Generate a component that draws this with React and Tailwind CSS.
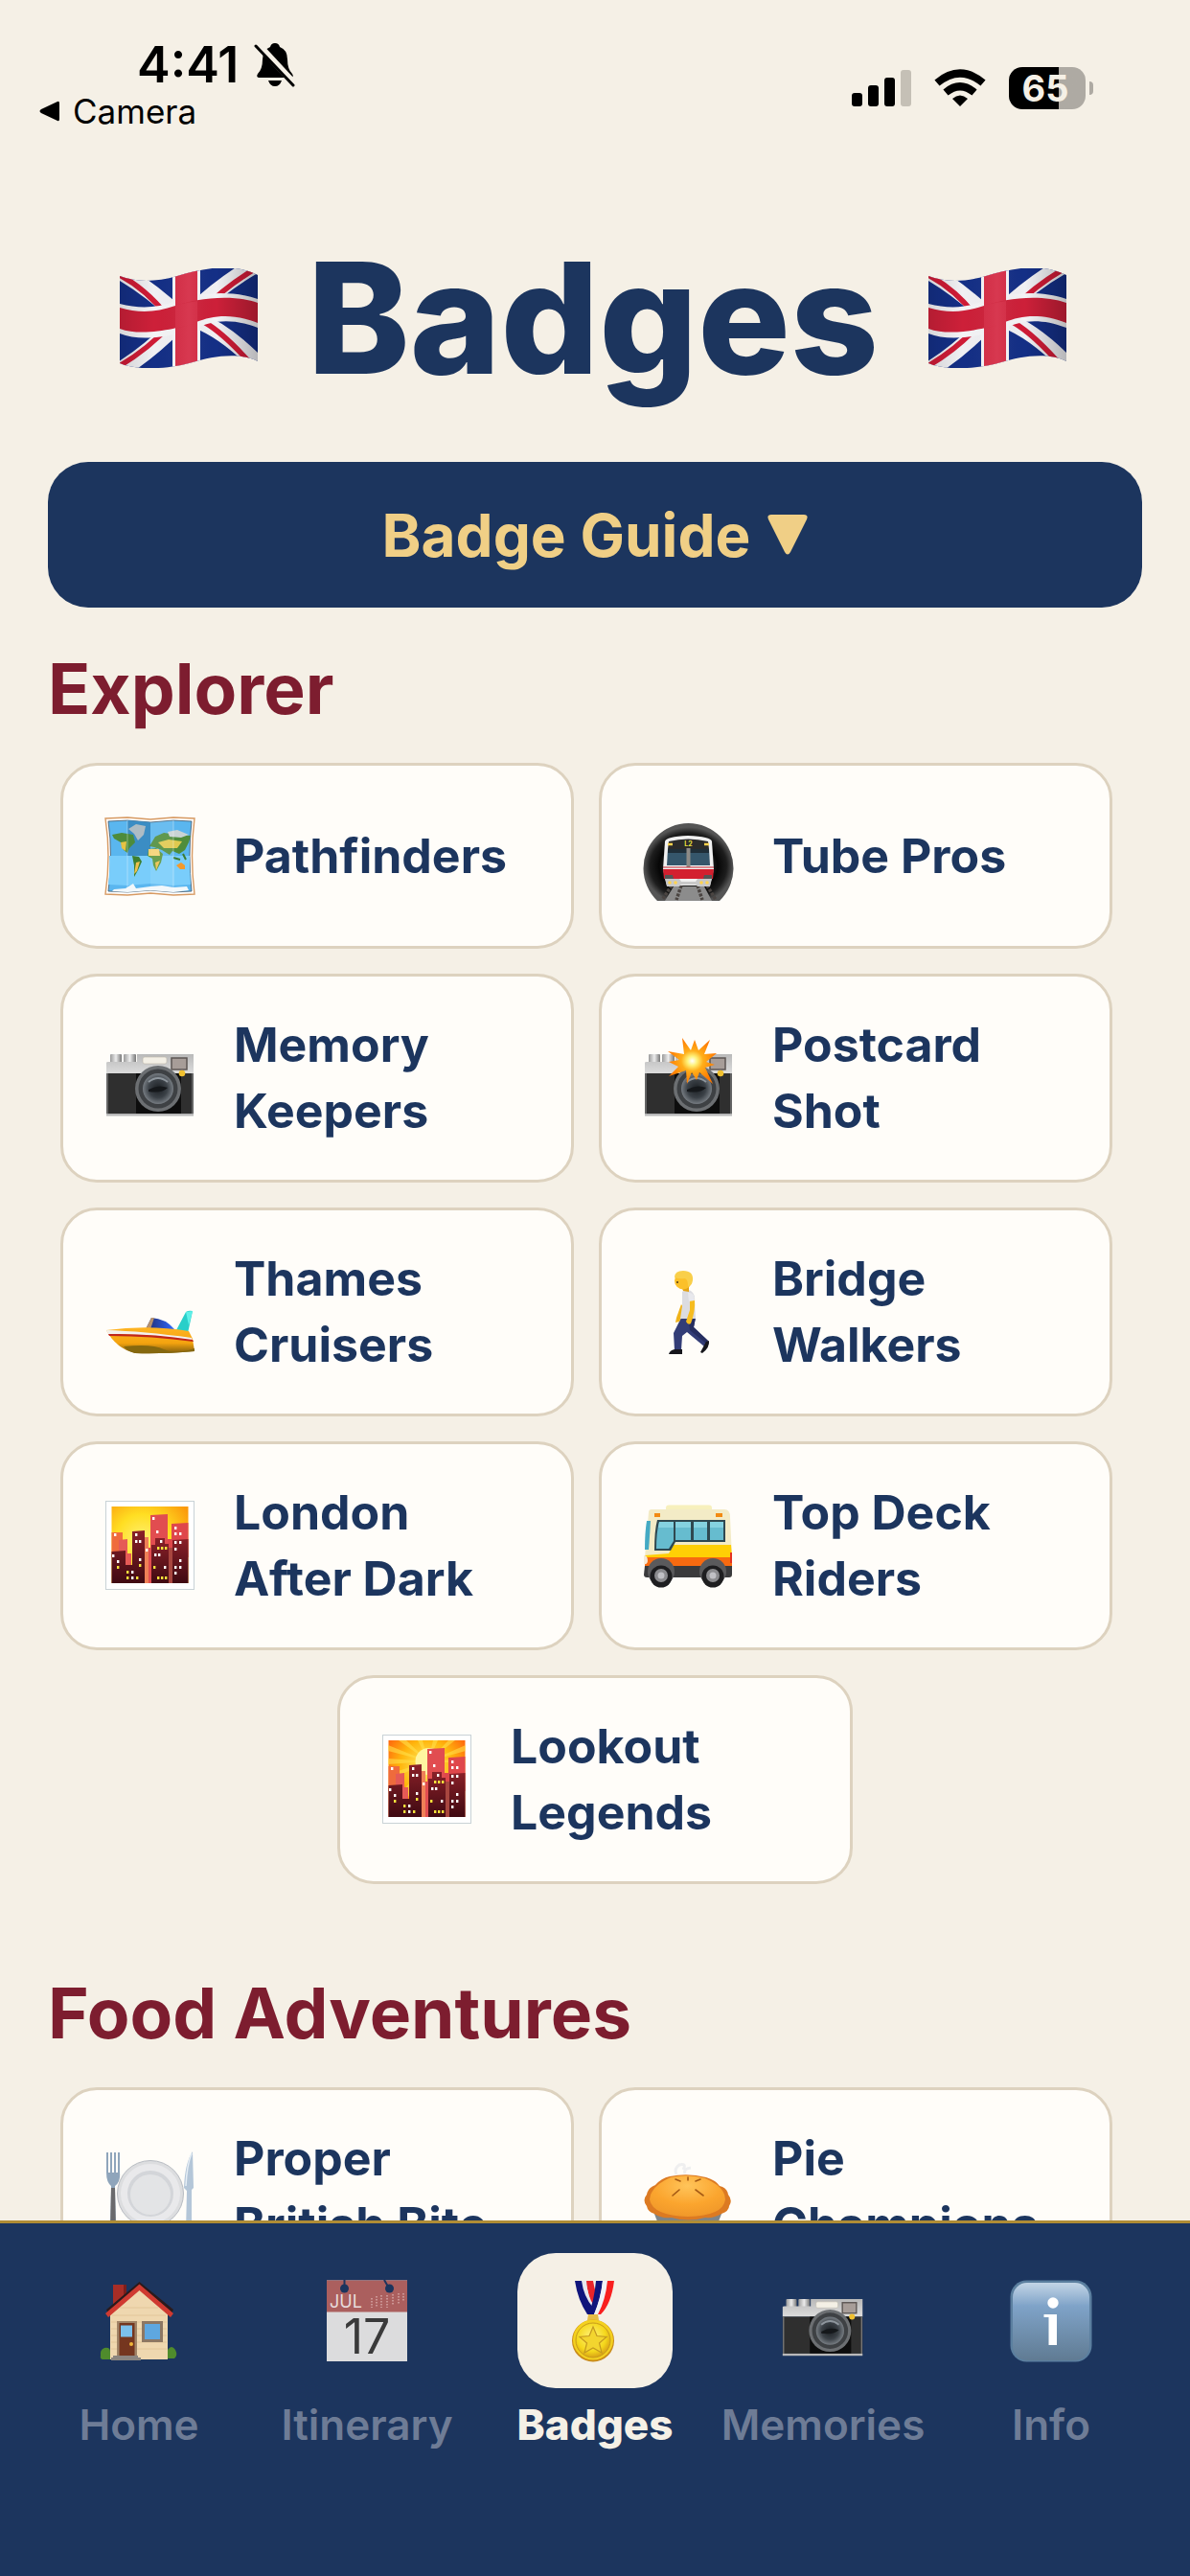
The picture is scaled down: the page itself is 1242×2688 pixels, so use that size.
import React from 'react';

const UnionJack = () => (
  <svg viewBox="0 0 144 104" className="w-36 h-[104px] shrink-0" role="img" aria-label="Union Jack">
    <defs>
      <clipPath id="flagShape">
        <path d="M0 8C15 14 36 15 60 8S116 -7 144 7V97C124 87 96 92 76 98S20 108 0 99Z" />
      </clipPath>
      <linearGradient id="flagShade" x1="0" x2="1" y1="0" y2="0">
        <stop offset="0" stopColor="#000" stopOpacity="0.12" />
        <stop offset="0.25" stopColor="#000" stopOpacity="0" />
        <stop offset="0.5" stopColor="#fff" stopOpacity="0.06" />
        <stop offset="0.7" stopColor="#000" stopOpacity="0" />
        <stop offset="1" stopColor="#000" stopOpacity="0.24" />
      </linearGradient>
    </defs>
    <g clipPath="url(#flagShape)">
      <rect width="144" height="104" fill="#142f86" />
      <g stroke="#f0f0f3" strokeWidth="17" fill="none">
        <path d="M-2 2Q30 20 62 50" />
        <path d="M150 -8Q112 12 78 44" />
        <path d="M-6 110Q26 92 60 58" />
        <path d="M80 54Q112 66 150 106" />
      </g>
      <g stroke="#cf1b36" strokeWidth="5.500" fill="none">
        <path d="M-2 6Q26 20 50 50" />
        <path d="M146 -2Q112 17 86 44" />
        <path d="M-4 104Q28 86 54 58" />
        <path d="M88 56Q112 70 144 108" />
      </g>
      <path d="M55 0H84V104H55Z" fill="#f4f4f6" />
      <path d="M0 37C20 42 38 42 58 34S116 22 144 32V62C116 51 96 55 80 62S24 78 0 68Z" fill="#f4f4f6" />
      <path d="M58 0H81V104H58Z" fill="#d52c45" />
      <path d="M0 41C20 47 38 46 58 39S116 26 144 36V57C116 46 96 50 80 56S24 72 0 63Z" fill="#cd2039" />
      <path d="M58 38L81 34V57L58 63Z" fill="#d52c45" />
      <rect width="144" height="104" fill="url(#flagShade)" />
    </g>
  </svg>
);

const MapArt = () => (
  <>
    <path d="M1 9L24 8L48 10L72 8L94 9Q89 48 94 88L72 89L48 87L24 89L1 88Q7 48 1 9Z" fill="#fff" stroke="#d79a63" strokeWidth="1.4" />
    <path d="M4 12L24 11L48 13L72 11L91 12Q87 48 91 85L72 86L48 84L24 86L4 85Q9 48 4 12Z" fill="#5ab6ef" stroke="#456" strokeWidth="0.8" />
    <path d="M24 11L48 13V48H24Z" fill="#3b8dc4" />
    <path d="M5 48H89Q89 66 90 78L72 79L48 77L24 79L4 78Q6 62 5 48Z" fill="#79cdfb" />
    <path d="M25 20L33 15L43 17L41 26L35 32L31 25Z" fill="#aebcc4" />
    <path d="M8 26L18 24L30 26L32 34L26 40L24 45L20 42L17 34L10 30Z" fill="#4d8b3c" />
    <path d="M17 34L23 33L22 43L18 40Z" fill="#e5c344" />
    <path d="M29 48L36 49L39 54L35 63L31 70L31 58Z" fill="#3d7f30" />
    <path d="M33 55L37 54L34 64L31 67Z" fill="#eec04e" />
    <path d="M46 41L54 40L61 46L59 55L54 64L51 58L50 51L45 48Z" fill="#58953c" />
    <path d="M46 41L57 41L58 48L46 48Z" fill="#f3d374" />
    <path d="M53 55L58 53L54 63Z" fill="#eec04e" />
    <path d="M47 38L53 28L62 24L76 26L90 27L88 34L84 42L78 46L71 43L68 47L60 42L52 39Z" fill="#4f8d3b" />
    <path d="M56 34L67 31L81 33L76 40L62 40Z" fill="#dfc94f" />
    <path d="M66 23L76 21L88 26L80 29L68 28Z" fill="#c9d3d3" />
    <path d="M75 58L80 55L84 58L84 62L79 62Z" fill="#f49a2c" />
    <path d="M72 50L79 52M82 46L85 52" stroke="#3c7c34" strokeWidth="2" />
    <path d="M10 83L22 82L30 77L33 82L48 80L60 79L72 81L86 80L88 84L72 86L48 84L24 86L8 85Z" fill="#f2f8fb" />
    <path d="M24 11V86M72 11V86" stroke="#fff" strokeOpacity="0.35" />
    <path d="M48 13L72 11V86L48 84Z" fill="#fff" fillOpacity="0.1" />
  </>
);

const TubeArt = () => (
  <>
    <defs>
      <radialGradient id="tunnel" cx="0.5" cy="0.55" r="0.5">
        <stop offset="0" stopColor="#777" />
        <stop offset="0.65" stopColor="#060606" />
        <stop offset="0.85" stopColor="#1d1d1d" />
        <stop offset="1" stopColor="#555" />
      </radialGradient>
    </defs>
    <path d="M15 95A47 47 0 1 1 80 95Z" fill="url(#tunnel)" />
    <path d="M32 80H64L72 95H23Z" fill="#8c8c8c" />
    <path d="M30 79L20 94M40 79L35 94M57 79L62 94M67 79L76 94" stroke="#4b4542" strokeWidth="3.500" strokeDasharray="3 1.5" />
    <path d="M23 33Q24 28 47 27Q71 28 72 33L74 62L70 79H25L21 62Z" fill="#f1f1f1" />
    <path d="M27 33Q47 28 68 33L69 41H26Z" fill="#2b2b2b" />
    <path d="M26 41H69L70 58H25Z" fill="#35566b" />
    <path d="M26 41H69V45H26Z" fill="#1f2e38" />
    <rect x="45.500" y="40" width="4" height="20" fill="#8e8b87" />
    <text x="47.500" y="38" fontSize="7" fontWeight="700" textAnchor="middle" fill="#e8e23c" fontFamily="Inter, sans-serif">L2</text>
    <path d="M26 36H31M64 36H69" stroke="#ffd34f" strokeWidth="2.400" />
    <path d="M21 62H74L73 72H22Z" fill="#d3202f" />
    <path d="M21 60H74" stroke="#c12430" strokeWidth="1" />
    <path d="M23 68H31L32 72H23ZM72 68H64L63 72H72Z" fill="#555" />
    <path d="M23 72H38L40 75H55L57 72H72L70 80H57L55 78H40L38 80H25Z" fill="#c9c9c9" />
    <g fill="#ffd34f">
      <circle cx="28" cy="76" r="1.800" />
      <circle cx="34" cy="76" r="1.800" />
      <circle cx="61" cy="76" r="1.800" />
      <circle cx="67" cy="76" r="1.800" />
    </g>
  </>
);

const CameraArt = () => (
  <>
    <defs>
      <linearGradient id="silver" x1="0" x2="0" y1="0" y2="1">
        <stop offset="0" stopColor="#b9b9b9" />
        <stop offset="1" stopColor="#dcdcdc" />
      </linearGradient>
      <linearGradient id="dial" x1="0" x2="1" y1="0" y2="0">
        <stop offset="0" stopColor="#9a9a9a" />
        <stop offset="0.5" stopColor="#ececec" />
        <stop offset="1" stopColor="#777" />
      </linearGradient>
      <radialGradient id="glass">
        <stop offset="0" stopColor="#1c2024" />
        <stop offset="0.6" stopColor="#3b4147" />
        <stop offset="1" stopColor="#767c82" />
      </radialGradient>
    </defs>
    <rect x="6" y="23" width="12" height="9" rx="1" fill="url(#dial)" />
    <rect x="20" y="23" width="13" height="9" rx="1" fill="url(#dial)" />
    <path d="M2 32Q2 31 4 31H34V23H93V43H2Z" fill="url(#silver)" />
    <rect x="2" y="43" width="91" height="42" fill="#2f2f2f" />
    <rect x="33" y="43" width="47" height="42" fill="#0d0d0d" />
    <rect x="2" y="85" width="91" height="2.500" fill="#b9b9b9" />
    <path d="M3 43V85M92 43V85" stroke="#777" strokeWidth="1.500" />
    <rect x="40" y="26" width="25" height="7" rx="2" fill="#f4f0e6" stroke="#bdb7aa" strokeWidth="0.600" />
    <rect x="70" y="27" width="16" height="12" fill="#a79d98" stroke="#5c5653" strokeWidth="1.500" />
    <circle cx="56" cy="59" r="24" fill="#6c6f72" />
    <circle cx="56" cy="59" r="20.500" fill="#3e4144" />
    <circle cx="56" cy="59" r="16" fill="url(#glass)" />
    <path d="M46 52Q56 44 66 52" stroke="#8e969d" strokeWidth="2" fill="none" />
    <path d="M46 60Q56 54 66 58Q60 64 46 62Z" fill="#15181b" />
    <circle cx="81" cy="43" r="3.300" fill="#f0c02f" />
  </>
);

const FlashCameraArt = () => (
  <>
    <defs>
      <radialGradient id="flash">
        <stop offset="0" stopColor="#fff" />
        <stop offset="0.2" stopColor="#fff27a" />
        <stop offset="0.45" stopColor="#ffae1a" />
        <stop offset="1" stopColor="#ff7800" />
      </radialGradient>
    </defs>
    <CameraArt />
    <path d="M41 6L50 19L54 8L58 19L70 8L64 23L77 22L66 31L75 34L65 37L73 54L59 42L56 50L51 42L46 54L45 40L27 46L37 36L27 31L38 29L26 20L43 23Z" fill="url(#flash)" />
  </>
);

const BoatArt = () => (
  <>
    <defs>
      <linearGradient id="hull" x1="0" x2="0" y1="0" y2="1">
        <stop offset="0" stopColor="#ffb422" />
        <stop offset="0.6" stopColor="#f4a30f" />
        <stop offset="1" stopColor="#7d5c0e" />
      </linearGradient>
      <linearGradient id="cabin" x1="0" x2="1" y1="0" y2="0">
        <stop offset="0" stopColor="#222b6b" />
        <stop offset="1" stopColor="#2e68ff" />
      </linearGradient>
    </defs>
    <path d="M43 66L49 54Q64 55 73 66Z" fill="url(#cabin)" />
    <path d="M43 66L49 54L52 54L48 66Z" fill="#b7926f" />
    <path d="M75 67L85 48Q88 46 92 47L87 70Z" fill="#29cfc9" />
    <path d="M85 48L92 47L88 62Z" fill="#5ff0e8" />
    <path d="M2 67Q46 61 88 68L92 76L94 89Q60 92 32 91Q12 86 2 67Z" fill="url(#hull)" />
    <path d="M2 67Q40 68 91 75L92 78Q50 71 4 71Z" fill="#f3f1ee" />
    <path d="M4 71Q48 70 92 77L93 79Q50 73 5 73Z" fill="#c1261b" />
    <path d="M20 84Q50 81 62 87T94 86V89Q60 92 32 91Q24 89 20 84Z" fill="#86680f" />
  </>
);

const WalkerArt = () => (
  <>
    <path d="M40 54L55 54L53 64L68 78L64 84L46 69L41 73L40 88H33L32 70Z" fill="#333d77" />
    <path d="M48 57L55 54L53 64L68 78L66 81L49 67Z" fill="#262e60" />
    <path d="M27 92Q28 88 33 87H41V92ZM60 90L66 79L69 78Q70 85 62 91Z" fill="#16161c" />
    <path d="M40 40L35 54L34 59L38 58L44 46Z" fill="#f0b31a" />
    <path d="M41 27Q45 23 50 26Q55 29 54 38L55 55L39 55L41 42Z" fill="#dcdce0" />
    <path d="M49 33L54 34Q55 47 50 60Q47 62 45 58L49 46Z" fill="#f6bc1f" />
    <path d="M47 28Q54 27 54 36L48 37Z" fill="#e8e8ec" />
    <path d="M40 20H48V27L42 26Z" fill="#e2a316" />
    <circle cx="42" cy="15.500" r="9" fill="#fbc02a" />
    <path d="M33 12Q33 5 42 5Q53 5 52 15Q51 21 47 21Q47 14 44 13Q38 14 33 12Z" fill="#f9cf4a" />
    <circle cx="36" cy="17" r="1" fill="#4a3411" />
  </>
);

const cityWindows = [
  [10, 35], [50, 18], [54, 32], [73, 28], [73, 34], [78, 34], [73, 43], [78, 43], [73, 50],
  [32, 35], [36, 42], [32, 42], [58, 42], [8, 57], [13, 63], [36, 61], [52, 56], [56, 56],
  [62, 69], [73, 69], [78, 69], [78, 62], [73, 75], [28, 74], [28, 80], [43, 51],
];
const cityLights = [[55, 49], [59, 49], [63, 49], [13, 69], [23, 74], [23, 80], [33, 80], [36, 67], [51, 69], [55, 80], [59, 80], [63, 80]];

const CityArt = ({ sunrise = false }) => (
  <>
    <defs>
      <radialGradient id="duskSky" cx="0.4" cy="0.45" r="0.7">
        <stop offset="0" stopColor="#fff176" />
        <stop offset="0.5" stopColor="#ffde22" />
        <stop offset="1" stopColor="#fb9a0c" />
      </radialGradient>
      <radialGradient id="dawnSky" cx="0.5" cy="0.35" r="0.7">
        <stop offset="0" stopColor="#fff06a" />
        <stop offset="0.5" stopColor="#ffb60d" />
        <stop offset="1" stopColor="#ff4a0d" />
      </radialGradient>
      <linearGradient id="tower" x1="0" x2="0" y1="0" y2="1">
        <stop offset="0" stopColor="#8a2028" />
        <stop offset="1" stopColor="#3f0a12" />
      </linearGradient>
    </defs>
    <rect x="1.500" y="1.500" width="92" height="92" fill="#fff" stroke="#c9d2d6" />
    <rect x="7.500" y="7" width="80" height="80" fill={sunrise ? 'url(#dawnSky)' : 'url(#duskSky)'} />
    {sunrise && (
      <>
        <path
          d="M49 29L7 12V18ZM49 29L18 7H26ZM49 29L38 7H43ZM49 29L54 7H59ZM49 29L70 7H77ZM49 29L88 12V18ZM49 29L88 26V31ZM49 29L7 26V32ZM49 29L8 42V49ZM49 29L22 60L28 66Z"
          fill="#ffe04a"
          fillOpacity="0.6"
        />
        <circle cx="49.500" cy="29" r="14" fill="#fff5a0" />
      </>
    )}
    <path d="M7.500 34H19V60H7.500Z" fill="#ef6b3c" />
    <path d="M15 42L24 41V56H28V70H15Z" fill="#e55a56" />
    <path d="M42 39H46V87H42Z" fill="#ef8057" />
    <path d="M48 16L66 15V87H46V50H48Z" fill="#e14d50" />
    <path d="M66 41H70V25L87.500 24V60H66Z" fill="#df474b" />
    <path d="M7.500 54L22 53V68H29V33L42 32V87H7.500Z" fill="url(#tower)" />
    <path d="M49 47H53V40H63V46H67V60H71V42L87.500 41V87H49Z" fill="url(#tower)" />
    <path d="M67 50H71V87H67Z" fill="#a8463f" />
    {cityWindows.map(([x, y]) => (
      <rect key={`${x}-${y}`} x={x} y={y} width="2.400" height="3" fill="#fff" />
    ))}
    {cityLights.map(([x, y]) => (
      <rect key={`${x}-${y}`} x={x} y={y} width="2.400" height="3" fill="#f4e23c" />
    ))}
  </>
);

const SunriseArt = () => <CityArt sunrise />;

const BusArt = () => (
  <>
    <rect x="24" y="5.500" width="48" height="8" rx="3" fill="#f7f0bd" />
    <path d="M6 13Q6 10 9 10H85Q91 10 91 18L93 60V80H2V60Z" fill="#f3ebc6" />
    <path d="M2 58L27 56L32 47H92L93 60H2Z" fill="#ffcf05" />
    <path d="M2 60H93V70H2Z" fill="#f76a10" />
    <path d="M2 69H93V78Q93 81 90 81H4Q1 81 1 78Z" fill="#3a3a3c" />
    <path d="M4 22H8Q7 40 6 52H2Q2 34 4 22Z" fill="#45aac4" />
    <path d="M15 21H86V44H34L29 53H12Q12 32 15 21Z" fill="#2f4850" />
    <path d="M17 23H32V43L27 51H14Q14 34 17 23ZM34 23H50V42H34ZM53 23H67V42H53ZM70 23H84V42H70Z" fill="#66bccf" />
    <path d="M17 23H32V29H16ZM34 23H50V29H34ZM53 23H67V29H53ZM70 23H84V29H70Z" fill="#85d2e0" />
    <path d="M12 14H18V18H12ZM76 14H83V18H76Z" fill="#f28a12" />
    <path d="M1 58Q5 58 5 64Q4 68 1 67Z" fill="#f4e9d8" />
    <path d="M91 55H93V66H91Z" fill="#e53222" />
    <circle cx="19" cy="75" r="14" fill="#5a5a5c" />
    <circle cx="73" cy="75" r="14" fill="#5a5a5c" />
    <circle cx="19" cy="80" r="11.500" fill="#1e1e20" />
    <circle cx="73" cy="80" r="11.500" fill="#1e1e20" />
    <circle cx="19" cy="79" r="7" fill="#8b8b8e" />
    <circle cx="73" cy="79" r="7" fill="#8b8b8e" />
    <circle cx="19" cy="79" r="3.500" fill="#c0c0c4" />
    <circle cx="73" cy="79" r="3.500" fill="#c0c0c4" />
  </>
);

const PlateArt = () => (
  <>
    <path d="M2 7V28Q2 38 7 42L6 90H12L11 42Q17 38 16 28V7" fill="#8fa5bb" />
    <path d="M5 7V28M9 7V28M13 7V28" stroke="#fffdf9" strokeWidth="2" />
    <path d="M7 44L6 90H12L11 44Z" fill="#6a6a6c" />
    <path d="M92 6Q84 18 83 44L86 47L85 90H91L91 46L93 44Z" fill="#b4c6d8" />
    <path d="M91 8Q86 20 85 42" stroke="#e6eef5" strokeWidth="1.500" fill="none" />
    <circle cx="48" cy="50" r="34.500" fill="#dcdddf" stroke="#b8bcc2" />
    <circle cx="48" cy="50" r="31" fill="#e9e9eb" />
    <circle cx="48" cy="50" r="24" fill="#d3d5d9" />
    <circle cx="48" cy="51" r="21" fill="#e3e4e6" />
  </>
);

const PieArt = () => (
  <>
    <defs>
      <radialGradient id="crust" cx="0.5" cy="0.25" r="0.75">
        <stop offset="0" stopColor="#ffc45a" />
        <stop offset="0.6" stopColor="#fba52e" />
        <stop offset="1" stopColor="#f0982a" />
      </radialGradient>
    </defs>
    <path d="M35 30Q32 24 38 20Q46 18 42 25M44 29Q42 24 50 23" stroke="#efefef" strokeWidth="3" fill="none" />
    <path d="M10 66H84L74 92H20Z" fill="#7d8489" />
    <path d="M28 32Q47 28 66 33Q76 36 80 42Q88 44 89 51Q94 57 90 63Q90 68 82 71Q74 76 65 75Q47 80 30 75Q18 76 12 71Q5 69 4 63Q-1 57 4 51Q5 44 13 41Q19 34 28 32Z" fill="#dc7a22" />
    <path d="M29 33Q47 29 65 34Q86 43 86 56Q84 73 47 74Q10 73 7 56Q8 42 29 33Z" fill="url(#crust)" />
    <path d="M31 52L38 46M63 52L55 46M34 35L39 37M60 35L55 37M47 33V36" stroke="#a65a14" strokeWidth="1.600" strokeLinecap="round" />
  </>
);

const HouseArt = () => (
  <>
    <path d="M17 6H31V22L17 32Z" fill="#a82d26" />
    <path d="M31 6V20L28 23V6Z" fill="#7c1e1b" />
    <path d="M14 34L44 9L74 34V84H14Z" fill="#efd7af" />
    <path d="M16 38H72M15 45H73M15 52H73M15 59H73M15 66H73M15 73H73M24 30H64" stroke="#dfc294" strokeWidth="0.800" />
    <path d="M10 32L44.500 3L80 32L78 36L44.500 9L12 36Z" fill="#2b1a1c" />
    <path d="M9 36L44.500 5.500L80 36L77 40L44.500 12L12 40Z" fill="#cf3a31" />
    <rect x="21" y="44" width="21" height="37" fill="#a08468" />
    <rect x="23.500" y="46" width="16" height="35" fill="#75361f" />
    <rect x="25" y="48.500" width="12" height="12" fill="#7cc0ec" />
    <circle cx="36" cy="68" r="2" fill="#f1b73a" />
    <rect x="47" y="44" width="22" height="22" fill="#8d7763" />
    <rect x="50" y="47" width="16" height="16" fill="#5ea7e0" />
    <path d="M17 80H43V82H46V85H15V82H17Z" fill="#8b8580" />
    <path d="M4 80Q3 74 8 72Q14 71 14 76V84H6Q3 83 4 80ZM74 74Q78 68 82 74Q85 80 81 83H74Z" fill="#4f8b2c" />
  </>
);

const CalendarArt = () => (
  <>
    <rect x="2" y="1.500" width="84" height="84.500" fill="#dcdcdd" />
    <rect x="2" y="1.500" width="84" height="33" fill="#ab5f5e" />
    <circle cx="20.500" cy="10" r="4.500" fill="#1c355e" />
    <circle cx="67.500" cy="10" r="4.500" fill="#1c355e" />
    <path d="M20.500 1V8M62 1L66 8" stroke="#1c355e" strokeWidth="2" />
    <text x="5" y="30" fontSize="18" fill="#e8dcdc" fontFamily="Inter, sans-serif">JUL</text>
    <path d="M49 20V30M54 18V30M59 17V30M65 17V30M71 16V28M77 15V27M82 15V24" stroke="#cf9c9b" strokeWidth="1.800" strokeDasharray="1.500 1.500" />
    <text x="44" y="78" fontSize="50" textAnchor="middle" fill="#3a3a3a" fontFamily="Inter, sans-serif">17</text>
  </>
);

const MedalArt = () => (
  <>
    <defs>
      <radialGradient id="gold" cx="0.45" cy="0.4" r="0.6">
        <stop offset="0" stopColor="#fff27c" />
        <stop offset="0.7" stopColor="#f5d81c" />
        <stop offset="1" stopColor="#d9a315" />
      </radialGradient>
    </defs>
    <path d="M34 2H42Q44 14 48 22L42 36Z" fill="#e9252a" />
    <path d="M28 2H35Q36 18 43 28V37Z" fill="#e8e8ee" />
    <path d="M23 2H30Q32 18 42 30L41 37H36Q26 22 23 2Z" fill="#10157c" />
    <path d="M45 2H52Q50 22 43 37H37Q43 24 45 2Z" fill="#10157c" />
    <path d="M52 2H58Q56 22 48 37H43Q50 20 52 2Z" fill="#f1f1f6" />
    <path d="M57 2H64Q61 26 50 37H47Q55 22 57 2Z" fill="#f81f1f" />
    <path d="M36 43L37 37H47L48 43Z" fill="#e7bd47" />
    <circle cx="42" cy="64.500" r="22" fill="#c98b1a" />
    <circle cx="42" cy="63.500" r="21" fill="#f4d11f" />
    <circle cx="42" cy="64" r="18" fill="url(#gold)" stroke="#c89b1c" />
    <path d="M42 50L46 59.500L56 60.500L48.500 67L51 77L42 72L33 77L35.500 67L28 60.500L38 59.500Z" fill="#f3d52f" stroke="#c4981f" strokeWidth="1.200" />
  </>
);

const InfoArt = () => (
  <>
    <defs>
      <linearGradient id="infoBlue" x1="0" x2="0" y1="0" y2="1">
        <stop offset="0" stopColor="#c3d5e6" />
        <stop offset="0.3" stopColor="#7fa3c8" />
        <stop offset="1" stopColor="#607b93" />
      </linearGradient>
    </defs>
    <rect x="1.500" y="1.500" width="85" height="85" rx="17" fill="#5b7f9f" />
    <rect x="4" y="4" width="80" height="81" rx="15" fill="url(#infoBlue)" />
    <circle cx="46" cy="25" r="5.700" fill="#fff" />
    <path d="M36.500 37H50V69H41.500V40H36.500Z" fill="#fff" />
  </>
);

const sections = [
  {
    title: 'Explorer',
    badges: [
      { label: 'Pathfinders', Art: MapArt },
      { label: 'Tube Pros', Art: TubeArt },
      { label: 'Memory Keepers', Art: CameraArt },
      { label: 'Postcard Shot', Art: FlashCameraArt },
      { label: 'Thames Cruisers', Art: BoatArt },
      { label: 'Bridge Walkers', Art: WalkerArt },
      { label: 'London After\u00a0Dark', Art: CityArt },
      { label: 'Top Deck Riders', Art: BusArt },
      { label: 'Lookout Legends', Art: SunriseArt },
    ],
  },
  {
    title: 'Food Adventures',
    badges: [
      { label: 'Proper British\u00a0Bite', Art: PlateArt },
      { label: 'Pie Champions', Art: PieArt },
    ],
  },
];

const tabs = [
  { label: 'Home', Art: HouseArt, box: '0 0 88 88' },
  { label: 'Itinerary', Art: CalendarArt, box: '0 0 88 88' },
  { label: 'Badges', Art: MedalArt, box: '0 0 88 88', active: true },
  { label: 'Memories', Art: CameraArt, box: '0 0 96 96' },
  { label: 'Info', Art: InfoArt, box: '0 0 88 88' },
];

const StatusBar = () => (
  <header className="flex justify-between pl-10 pr-[101px] pt-10 text-black">
    <div>
      <div className="flex items-center gap-4 pl-[103px] text-[52px] leading-14 font-semibold">
        <span>4:41</span>
        <svg viewBox="0 0 44 48" className="w-11 h-12" aria-hidden="true">
          <path d="M22 1Q26 1 27 5Q35 8 35 18Q35 28 40 33Q42 36 39 37H5Q2 36 4 33Q9 28 9 18Q9 8 17 5Q18 1 22 1ZM15 40H29Q27 46 22 46Q17 46 15 40Z" />
          <path d="M4 2L42 43" stroke="#f5f0e6" strokeWidth="7" />
          <path d="M2 4L41 45" stroke="#000" strokeWidth="3" strokeLinecap="round" />
        </svg>
      </div>
      <a href="#camera" className="flex items-center gap-3 text-[35px] leading-10">
        <svg viewBox="0 0 24 24" className="size-6" aria-hidden="true">
          <path d="M20 2Q22 1 22 4V20Q22 23 20 22L3 14Q0 12 3 10Z" />
        </svg>
        Camera
      </a>
    </div>
    <div className="flex h-26 items-center gap-6">
      <svg viewBox="0 0 62 40" className="w-[62px] h-10" aria-label="Signal">
        <rect x="0" y="25" width="11" height="14" rx="3" />
        <rect x="17" y="17" width="11" height="22" rx="3" />
        <rect x="34" y="9" width="11" height="30" rx="3" />
        <rect x="51" y="1" width="11" height="38" rx="3" fill="#c5c0b6" />
      </svg>
      <svg viewBox="0 0 54 40" className="w-[54px] h-10" aria-label="Wi-Fi">
        <g fill="none" stroke="#000" strokeWidth="8">
          <path d="M3 14.500Q27 -5.500 51 14.500" />
          <path d="M12 24.500Q27 12 42 24.500" />
        </g>
        <path d="M19 31Q27 24 35 31L27 39Z" />
      </svg>
      <div className="flex items-center gap-1">
        <div className="w-20 h-11 rounded-[14px] bg-linear-to-r from-black from-65% to-[#aeaaa3] to-65% pr-1 text-center text-[38px] leading-11 font-bold text-[#f5f0e6]">
          65
        </div>
        <div className="w-1 h-3.5 rounded-r-full bg-[#aeaaa3]" />
      </div>
    </div>
  </header>
);

const BadgeCard = ({ label, Art, centered }) => {
  const place = centered ? 'col-span-2 w-[49%] ml-[18px] justify-self-center' : '';

  return (
    <button
      className={`${place} flex min-h-[194px] items-center gap-[39px] rounded-[38px] border-3 border-[#ddd2bf] bg-[#fffdf9] py-[37px] pl-[43px] pr-9 text-left`}
    >
      <svg viewBox="0 0 96 96" className="size-24 shrink-0" aria-hidden="true">
        <Art />
      </svg>
      <span className="text-[50px] leading-[69px] font-bold text-[#1c355e]">{label}</span>
    </button>
  );
};

const BadgeSection = ({ title, badges }) => (
  <section>
    <h2 className="text-[73px] leading-[90px] font-bold text-[#7d1d2f]">{title}</h2>
    <div className="mt-8 grid grid-cols-2 gap-[26px] pl-[13px] pr-[31px]">
      {badges.map((badge, i) => (
        <BadgeCard key={badge.label} {...badge} centered={badges.length % 2 === 1 && i === badges.length - 1} />
      ))}
    </div>
  </section>
);

const TabBar = () => (
  <nav className="grid shrink-0 grid-cols-5 border-t-3 border-[#b08d35] bg-[#1c355e] px-[26px] pt-[31px] pb-[133px]">
    {tabs.map(({ label, Art, box, active }) => (
      <button key={label} aria-current={active ? 'page' : undefined} className="flex flex-col items-center gap-[13px]">
        <span className={`flex h-[141px] w-[162px] items-center justify-center rounded-[40px] ${active ? 'bg-[#f5f0e6]' : ''}`}>
          <svg viewBox={box} className="size-[88px]" aria-hidden="true">
            <Art />
          </svg>
        </span>
        <span className={`text-[44px] leading-[50px] ${active ? 'font-extrabold text-[#f5f0e6]' : 'font-semibold text-[#6e7c96]'}`}>
          {label}
        </span>
      </button>
    ))}
  </nav>
);

const App = () => (
  <div className="flex h-screen flex-col bg-[#f5f0e6] font-[Inter,'Liberation_Sans',sans-serif]">
    <main className="min-h-0 flex-1 overflow-y-auto [scrollbar-width:none]">
      <StatusBar />
      <div className="px-[50px] pt-[98px] pb-12">
        <div className="flex items-center justify-center gap-[52px] pr-1">
          <UnionJack />
          <h1 className="text-[161px] leading-[180px] font-extrabold text-[#1c355e]">Badges</h1>
          <UnionJack />
        </div>
        <button className="mt-[60px] flex h-[152px] w-full items-center justify-center gap-[18px] rounded-[42px] bg-[#1c355e] text-[62px] font-bold text-[#f0cf86]">
          Badge Guide
          <svg viewBox="0 0 42 44" className="w-[42px] h-11" fill="currentColor" aria-hidden="true">
            <path d="M4 1H38Q43 1 41 6L24 40Q21 45 18 40L1 6Q-1 1 4 1Z" />
          </svg>
        </button>
        <div className="mt-10 flex flex-col gap-[90px]">
          {sections.map((section) => (
            <BadgeSection key={section.title} {...section} />
          ))}
        </div>
      </div>
    </main>
    <TabBar />
  </div>
);

export default App;
